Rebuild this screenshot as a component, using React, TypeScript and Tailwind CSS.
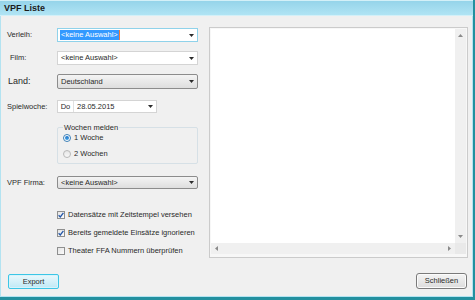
import React from "react";

const font = "font-['Liberation_Sans',Arial,sans-serif]";

function Arrow({ dir = "down", color = "#2b2b2b" }: { dir?: "down" | "up" | "left" | "right"; color?: string }) {
  const pts: Record<string, string> = {
    down: "0,0 5,0 2.5,3",
    up: "0,3 5,3 2.5,0",
    left: "3,0 3,5 0,2.5",
    right: "0,0 0,5 3,2.5",
  };
  const vertical = dir === "down" || dir === "up";
  return (
    <svg width={vertical ? 5 : 3} height={vertical ? 3 : 5} viewBox={vertical ? "0 0 5 3" : "0 0 3 5"}>
      <polygon points={pts[dir]} fill={color} />
    </svg>
  );
}

function Combo({ text, focused, selected }: { text: string; focused?: boolean; selected?: boolean }) {
  return (
    <div
      className={`w-[141px] h-[14px] flex items-center bg-white border ${
        focused ? "border-[#8fd2ea]" : "border-[#d4d4d4]"
      }`}
    >
      <div className="flex-1 pl-[2px] flex items-center">
        {selected ? (
          <span className="bg-[#3399ff] text-white px-[1px] leading-[10px] border-r border-[#f07a3a]">{text}</span>
        ) : (
          <span className="leading-[10px] pl-[1px]">{text}</span>
        )}
      </div>
      <div className="w-[12px] flex items-center justify-center">
        <Arrow />
      </div>
    </div>
  );
}

function DropList({ text, h }: { text: string; h: string }) {
  return (
    <div
      className={`w-[141px] ${h} flex items-center rounded-[2px] border border-[#8c8c8c] bg-gradient-to-b from-[#f4f4f4] to-[#dedede]`}
    >
      <span className="flex-1 pl-[3px] leading-[10px]">{text}</span>
      <div className="w-[12px] flex items-center justify-center">
        <Arrow />
      </div>
    </div>
  );
}

function Radio({ checked, label }: { checked?: boolean; label: string }) {
  return (
    <div className="flex items-center h-[10px] pl-[5px]">
      <div
        className={`w-[8px] h-[8px] rounded-full border flex items-center justify-center ${
          checked ? "border-[#3b7fb6] bg-white" : "border-[#b8b8b8] bg-gradient-to-b from-[#e6e6e6] to-[#f8f8f8]"
        }`}
      >
        {checked && <div className="w-[4px] h-[4px] rounded-full bg-gradient-to-b from-[#1d6fc4] to-[#42a4e8]" />}
      </div>
      <span className="ml-[3px] leading-[10px]">{label}</span>
    </div>
  );
}

function Check({ checked, label }: { checked?: boolean; label: string }) {
  return (
    <div className="flex items-center h-[12px]">
      <div className="w-[8px] h-[8px] border border-[#8e8f8f] bg-gradient-to-br from-[#e4e4e4] to-[#fbfbfb] flex items-center justify-center">
        {checked && (
          <svg width="6" height="6" viewBox="0 0 6 6">
            <path d="M0.6 3.2 L2.3 4.9 L5.4 0.8" stroke="#2457a8" strokeWidth="1.3" fill="none" />
          </svg>
        )}
      </div>
      <span className="ml-[3px] leading-[10px]">{label}</span>
    </div>
  );
}

export default function App() {
  return (
    <div
      className={`${font} w-[475px] h-[300px] flex flex-col overflow-hidden bg-[#f0f0f0] text-[7.5px] text-[#2a2a2a] border-r-[2px] border-b-[3px] border-[#23909f]`}
    >
      {/* title bar */}
      <div className="h-[16px] shrink-0 flex items-center pl-[4px] bg-gradient-to-b from-[#95d4ea] to-[#b0e4f4] border-t border-[#7cc1da] border-b border-[#d3f0f8]">
        <span className="font-bold text-[9px] text-[#1b1b1b] leading-[10px]">VPF Liste</span>
      </div>

      <div className="flex-1 flex flex-col border-l border-r border-b border-[#b3e3f1]">
        <div className="h-[242px] shrink-0 flex">
          {/* form column */}
          <div className="w-[197px] shrink-0 pl-[6px] pt-[12px] flex flex-col">
            <div className="flex items-center">
              <span className="w-[50px]">Verleih:</span>
              <Combo text="<keine Auswahl>" focused selected />
            </div>
            <div className="flex items-center mt-[9px]">
              <span className="w-[50px] pl-[3px]">Film:</span>
              <Combo text="<keine Auswahl>" />
            </div>
            <div className="flex items-center mt-[9px]">
              <span className="w-[50px] text-[9px] pl-[1px]">Land:</span>
              <DropList text="Deutschland" h="h-[15px]" />
            </div>
            <div className="flex items-center mt-[11px]">
              <span className="w-[50px]">Spielwoche:</span>
              <div className="w-[100px] h-[13px] flex items-center bg-white border border-[#d4d4d4]">
                <span className="w-[16px] h-full flex items-center justify-center border-r border-[#e0e0e0]">Do</span>
                <span className="flex-1 pl-[3px]">28.05.2015</span>
                <div className="w-[12px] flex items-center justify-center">
                  <Arrow />
                </div>
              </div>
            </div>
            <div className="ml-[50px] mt-[14px] w-[141px] h-[37px] border border-[#d6e0e6] rounded-[2px] flex flex-col">
              <span className="-mt-[5px] ml-[5px] self-start h-[9px] leading-[9px] px-[1px] bg-[#f0f0f0]">
                Wochen melden
              </span>
              <div className="mt-[1px]">
                <Radio checked label="1 Woche" />
              </div>
              <div className="mt-[6px]">
                <Radio label="2 Wochen" />
              </div>
            </div>
            <div className="flex items-center mt-[12px]">
              <span className="w-[50px]">VPF Firma:</span>
              <DropList text="<keine Auswahl>" h="h-[13px]" />
            </div>
            <div className="ml-[50px] mt-[20px] flex flex-col gap-[6px]">
              <Check checked label="Datensätze mit Zeitstempel versehen" />
              <Check checked label="Bereits gemeldete Einsätze ignorieren" />
              <Check label="Theater FFA Nummern überprüfen" />
            </div>
          </div>

          {/* list box */}
          <div className="ml-[11px] mt-[11px] w-[259px] h-[231px] border border-[#cbcbcb] bg-[#f7f7f7] p-[1px] flex flex-col">
            <div className="flex-1 flex">
              <div className="flex-1 bg-white" />
              <div className="w-[11px] bg-[#f0f0f0] flex flex-col items-center justify-between py-[5px]">
                <Arrow dir="up" color="#8a8a8a" />
                <Arrow dir="down" color="#8a8a8a" />
              </div>
            </div>
            <div className="h-[11px] flex">
              <div className="flex-1 bg-[#f0f0f0] flex items-center justify-between px-[4px]">
                <Arrow dir="left" color="#8a8a8a" />
                <Arrow dir="right" color="#8a8a8a" />
              </div>
              <div className="w-[11px] bg-[#e9e9e9]" />
            </div>
            <div className="h-[2px]" />
          </div>
        </div>

        {/* buttons */}
        <div className="flex justify-between items-start pt-[16px] pl-[7px] pr-[5px]">
          <button className="w-[51px] h-[15px] rounded-[2px] border border-[#3cc6e6] bg-gradient-to-b from-[#eaf8fc] to-[#bfe9f6] shadow-[inset_0_0_0_1px_#d8f3fb] flex items-center justify-center">
            Export
          </button>
          <button className="w-[51px] h-[16px] -mt-[1px] rounded-[3px] border border-[#7a7a7a] bg-gradient-to-b from-[#f4f4f4] to-[#dcdcdc] shadow-[inset_0_0_0_1px_#fbfbfb] flex items-center justify-center">
            Schließen
          </button>
        </div>
      </div>
    </div>
  );
}
